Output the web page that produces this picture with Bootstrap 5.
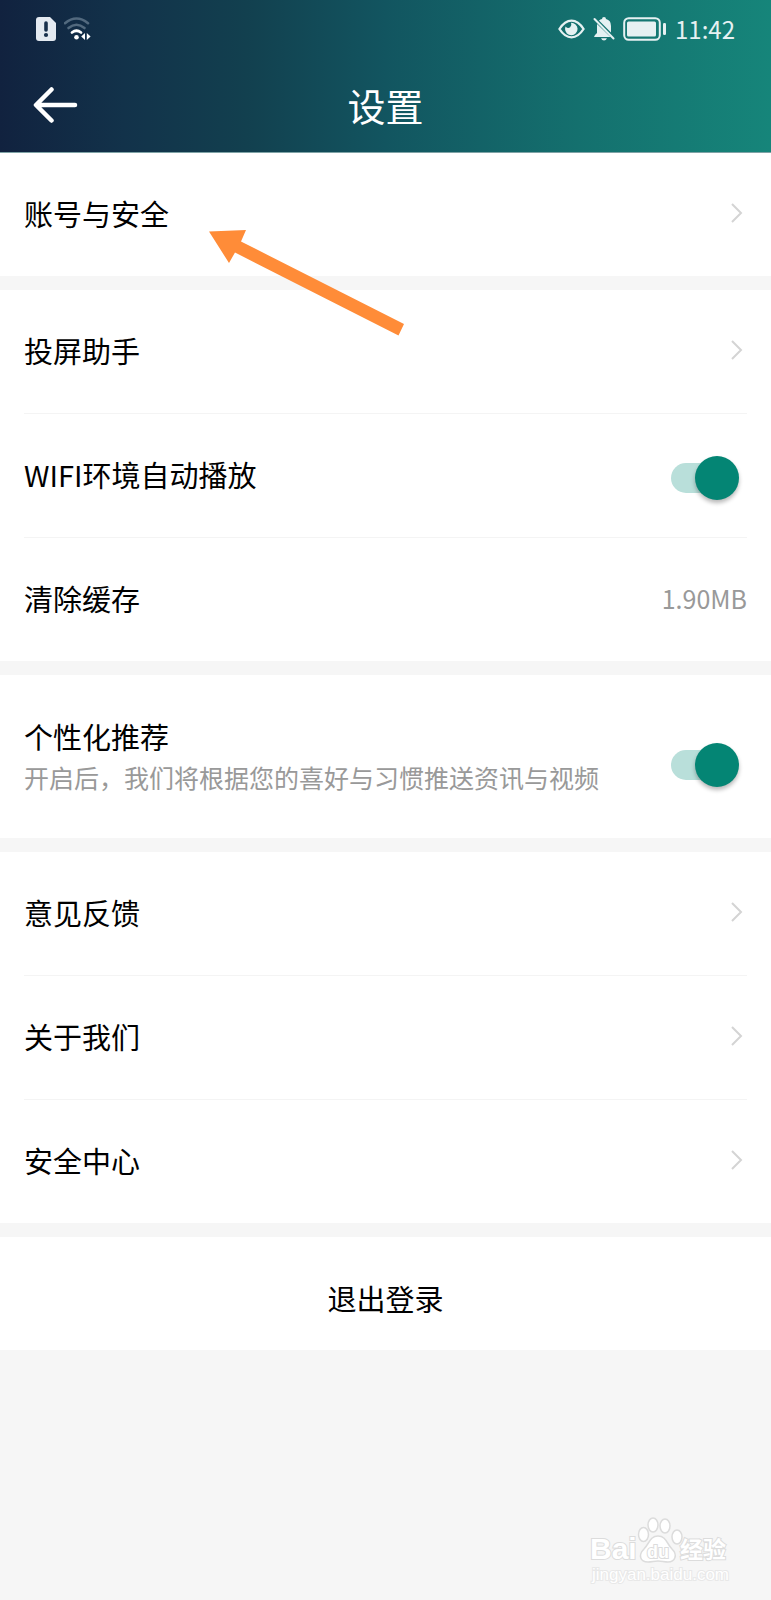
<!DOCTYPE html>
<html lang="zh-CN">
<head>
<meta charset="utf-8">
<meta name="viewport" content="width=device-width, initial-scale=1">
<title>设置</title>
<link href="https://cdn.jsdelivr.net/npm/bootstrap@5.3.0/dist/css/bootstrap.min.css" rel="stylesheet">
<style>
  body { font-family: "Noto Sans CJK SC", sans-serif; background: #f6f6f6; color: #000; }
  .app-header { background: linear-gradient(90deg, #11223f 0%, #12324a 16%, #12404f 32%, #125560 50%, #14706e 75%, #16857a 100%); border-bottom: 1px solid #7fa3a6; }
  .status-bar { height: 58px; padding: 0 36px; color: #e6f1f2; }
  .clock { font-size: 24px; line-height: 32px; }
  .title-bar { height: 94px; padding: 0 32px; }
  .title-bar h1 { font-size: 38px; line-height: 48px; font-weight: 400; }
  .side-slot { width: 46px; }
  .settings { display: grid; gap: 14px; }
  .setting-row { min-height: 123px; padding-bottom: 3px; font-size: 29px; line-height: 40px; color: #000; text-decoration: none; }
  .group > * { margin: 0 24px; }
  .group > .setting-row + .setting-row { min-height: 124px; border-top: 1px solid #f4f4f4; }
  .group > .tall-row { min-height: 163px; padding-bottom: 0; }
  .hint { font-size: 25px; line-height: 42px; color: #999; }
  .chevron { margin-right: 4px; }
  .logout { min-height: 113px; padding: 8px 0 0; font-size: 29px; line-height: 40px; }
  .toggle { appearance: none; position: relative; flex: none; width: 68px; height: 44px; margin: 0 8px 0 0; }
  .toggle::before { content: ""; position: absolute; inset: 7px 8px 7px 0; border-radius: 15px; background: #ccc; }
  .toggle::after { content: ""; position: absolute; top: 0; left: 0; width: 44px; height: 44px; border-radius: 50%; background: #fff; box-shadow: 0 3px 4px rgba(0,0,0,.28); }
  .toggle:checked::before { background: #b9dfda; }
  .toggle:checked::after { left: auto; right: 0; background: #048574; }
  .pointer { position: absolute; left: 208px; top: 76px; pointer-events: none; z-index: 2; }
  .watermark { padding: 0 36px 12px; }
</style>
</head>
<body>
<div class="d-flex flex-column min-vh-100">
  <header class="app-header text-white">
    <div class="status-bar d-flex align-items-center justify-content-between">
      <div class="d-flex align-items-center gap-2">
        <svg width="20" height="24" viewBox="0 0 20 24" aria-hidden="true"><path d="M3 0h11l6 6v15a3 3 0 0 1-3 3H3a3 3 0 0 1-3-3V3a3 3 0 0 1 3-3z" fill="#e4eaf1"/><path d="M10 6v7" stroke="#18304c" stroke-width="3.6" stroke-linecap="round"/><circle cx="10" cy="18" r="2.1" fill="#18304c"/></svg>
        <svg width="27" height="24" viewBox="0 0 27 24" fill="none" stroke-linecap="round" aria-hidden="true"><path d="M1 6.2Q12.500-3.200 24 6.200" stroke="#52697e" stroke-width="2.600"/><path d="M4.500 11Q12.500 4.500 20.500 11" stroke="#52697e" stroke-width="2.600"/><path d="M8 15.500Q12.500 12 17 15.500" stroke="#fff" stroke-width="2.800"/><circle cx="12.500" cy="20.300" r="2.300" fill="#fff"/><path d="M21 16v7l-3.800-3.500zM22.800 16v7l3.800-3.500z" fill="#fff"/></svg>
      </div>
      <div class="d-flex align-items-center">
        <svg class="me-2" width="27" height="20" viewBox="0 0 28 20" aria-hidden="true"><path d="M1.500 10Q7 1.300 14 1.300T26.500 10Q21 18.700 14 18.700T1.500 10z" fill="none" stroke="currentColor" stroke-width="2.400"/><path d="M13.500 3.500a6.500 6.500 0 1 1-6.200 6.500 6.500 6.500 0 0 1 .6-2.600q2.400 2.800 4.700.8 2-2.200.9-4.700z" fill="currentColor"/></svg>
        <svg class="me-2" width="22" height="24" viewBox="0 0 22 24" fill="currentColor" aria-hidden="true"><path d="M6 3.500A7 7 0 0 1 9 2q0-2 2-2t2 2q5 1.200 5 7v6.500zM4 7l13.500 13H1q0-1.500 3-4z"/><path d="M8 21.200h6q-1 2.300-3 2.300t-3-2.300z"/><path d="M1.500 2L20.500 21.500" stroke="currentColor" stroke-width="2" stroke-linecap="round"/></svg>
        <svg width="44" height="24" viewBox="0 0 44 24" aria-hidden="true"><rect x="1.200" y="1.200" width="35.600" height="21.600" rx="4.500" fill="none" stroke="currentColor" stroke-width="2"/><rect x="4" y="4.500" width="29" height="15" rx="1.500" fill="currentColor"/><rect x="40" y="6" width="3" height="12" rx="1.300" fill="currentColor"/></svg>
        <time class="clock ms-2">11:42</time>
      </div>
    </div>
    <nav class="title-bar d-flex align-items-center justify-content-between">
      <button type="button" class="side-slot btn p-0 border-0 text-white text-start d-flex" aria-label="返回"><svg width="46" height="36" viewBox="0 0 46 36" fill="none" stroke="currentColor" stroke-width="4.500" stroke-linecap="round" stroke-linejoin="round" aria-hidden="true"><path d="M19.500 2.500L4 18l15.500 15.500M4.500 18H43"/></svg></button>
      <h1 class="m-0">设置</h1>
      <span class="side-slot"></span>
    </nav>
  </header>

  <main class="settings">
    <section class="group bg-white position-relative">
      <a href="#account" class="setting-row d-flex align-items-center justify-content-between">账号与安全<svg class="chevron" width="12" height="20" viewBox="0 0 12 20" fill="none" stroke="#d4d4d4" stroke-width="2" aria-hidden="true"><path d="M1 1l9 9-9 9"/></svg></a>
      <svg class="pointer m-0" width="198" height="108" viewBox="208 229 198 108" aria-hidden="true"><path d="M209 231.500L246 230l-5 11.500L404 324l-5.500 11.500L235 252.500 229 263z" fill="#ff8c38"/></svg>
    </section>

    <section class="group bg-white">
      <a href="#cast" class="setting-row d-flex align-items-center justify-content-between">投屏助手<svg class="chevron" width="12" height="20" viewBox="0 0 12 20" fill="none" stroke="#d4d4d4" stroke-width="2" aria-hidden="true"><path d="M1 1l9 9-9 9"/></svg></a>
      <div class="setting-row d-flex align-items-center justify-content-between"><label for="autoplay">WIFI环境自动播放</label><input class="toggle mt-2" type="checkbox" role="switch" id="autoplay" checked></div>
      <a href="#cache" class="setting-row d-flex align-items-center justify-content-between">清除缓存<span class="hint">1.90MB</span></a>
    </section>

    <section class="group bg-white">
      <div class="setting-row tall-row d-flex align-items-center justify-content-between"><label for="recommend">个性化推荐<span class="hint d-block">开启后，我们将根据您的喜好与习惯推送资讯与视频</span></label><input class="toggle mt-3" type="checkbox" role="switch" id="recommend" checked></div>
    </section>

    <section class="group bg-white">
      <a href="#feedback" class="setting-row d-flex align-items-center justify-content-between">意见反馈<svg class="chevron" width="12" height="20" viewBox="0 0 12 20" fill="none" stroke="#d4d4d4" stroke-width="2" aria-hidden="true"><path d="M1 1l9 9-9 9"/></svg></a>
      <a href="#about" class="setting-row d-flex align-items-center justify-content-between">关于我们<svg class="chevron" width="12" height="20" viewBox="0 0 12 20" fill="none" stroke="#d4d4d4" stroke-width="2" aria-hidden="true"><path d="M1 1l9 9-9 9"/></svg></a>
      <a href="#safety" class="setting-row d-flex align-items-center justify-content-between">安全中心<svg class="chevron" width="12" height="20" viewBox="0 0 12 20" fill="none" stroke="#d4d4d4" stroke-width="2" aria-hidden="true"><path d="M1 1l9 9-9 9"/></svg></a>
    </section>

    <button type="button" class="logout btn w-100 bg-white text-black border-0 rounded-0">退出登录</button>
  </main>

  <footer class="watermark mt-auto d-flex justify-content-end">
    <svg width="146" height="72" viewBox="0 0 146 72" role="img" aria-label="Baidu 经验">
      <g fill="#fff" stroke="#dcdcdc" stroke-width="2">
        <g stroke-width="1.500">
          <ellipse cx="54.500" cy="18.500" rx="5" ry="7"/><ellipse cx="64" cy="9" rx="5" ry="7"/><ellipse cx="76" cy="10" rx="5" ry="7"/><ellipse cx="88" cy="21" rx="5" ry="7"/>
          <path d="M69 20c8 0 9 8 14 13 6 6 3 13-4 13-4 0-6-1-10-1s-6 1-10 1c-8 0-10-7-4-13 5-5 6-13 14-13z"/>
        </g>
        <g font-family="Liberation Sans, sans-serif" font-weight="700" paint-order="stroke">
          <text x="1" y="43" font-size="30">Bai</text>
          <text x="58" y="42" font-size="18">du</text>
        </g>
        <text x="91" y="42" font-family="Noto Sans CJK SC, sans-serif" font-weight="700" font-size="23" paint-order="stroke">经验</text>
        <text x="3" y="64" font-family="Liberation Sans, sans-serif" font-size="17" stroke="#e8e8e8" paint-order="stroke">jingyan.baidu.com</text>
      </g>
    </svg>
  </footer>
</div>
<script src="https://cdn.jsdelivr.net/npm/bootstrap@5.3.0/dist/js/bootstrap.bundle.min.js"></script>
</body>
</html>
